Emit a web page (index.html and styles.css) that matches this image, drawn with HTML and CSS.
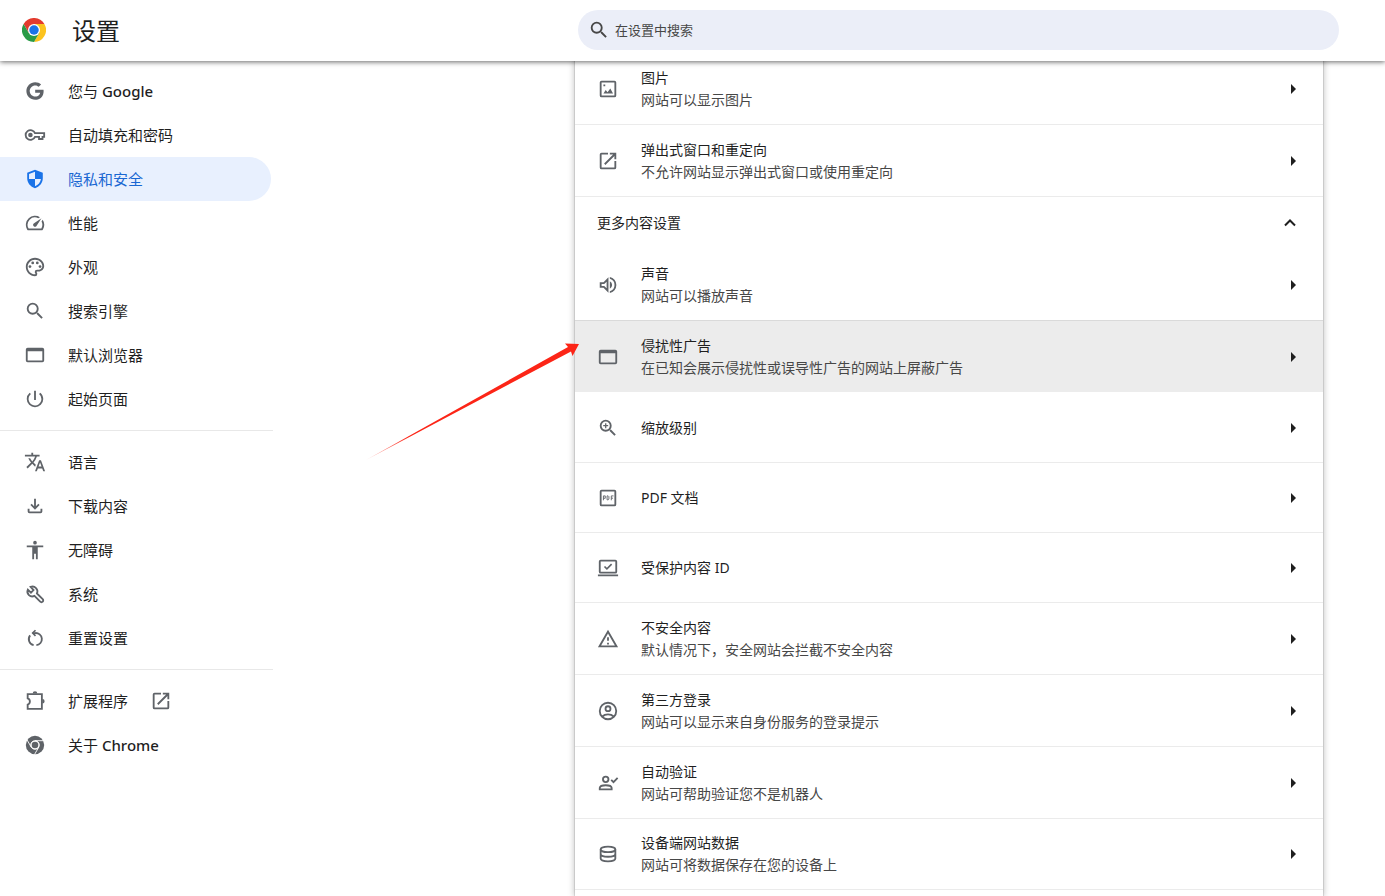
FILE: index.html
```html
<!DOCTYPE html>
<html lang="zh-CN">
<head>
<meta charset="utf-8">
<title>设置</title>
<link rel="stylesheet" href="styles.css">
</head>
<body>
<header class="toolbar">
  <svg class="logo" viewBox="0 0 48 48" aria-hidden="true">
    <circle cx="24" cy="24" r="24" fill="#fff"/>
    <path fill="#e33b2e" d="M24 12H44.8A24 24 0 0 0 3.2 12L13.6 30Z"/>
    <path fill="#fcc31e" d="M34.4 30 24 48A24 24 0 0 0 44.8 12H24Z"/>
    <path fill="#2a9a47" d="M13.6 30 3.2 12A24 24 0 0 0 24 48L34.4 30Z"/>
    <circle cx="24" cy="24" r="12" fill="#fff"/>
    <circle cx="24" cy="24" r="9.5" fill="#1a73e8"/>
  </svg>
  <h1 class="title">设置</h1>
  <label class="search">
    <svg class="search-icon" viewBox="0 0 24 24" aria-hidden="true"><path d="M15.5 14h-.79l-.28-.27A6.47 6.47 0 0 0 16 9.5 6.5 6.5 0 1 0 9.5 16c1.61 0 3.09-.59 4.23-1.57l.27.28v.79l5 4.99L20.49 19l-4.99-5zm-6 0C7.01 14 5 11.99 5 9.5S7.01 5 9.5 5 14 7.01 14 9.5 11.99 14 9.5 14z"/></svg>
    <input class="search-input" type="search" placeholder="在设置中搜索" aria-label="在设置中搜索">
  </label>
</header>

<div class="content">
  <nav class="menu">
    <a class="item" href="#"><svg class="icon" viewBox="-3 -3 30 30"><path d="M12.24 10.285V14.4h6.806c-.275 1.765-2.056 5.174-6.806 5.174-4.095 0-7.439-3.389-7.439-7.574s3.345-7.574 7.439-7.574c2.33 0 3.891.989 4.785 1.849l3.254-3.138C18.189 1.186 15.479 0 12.24 0c-6.635 0-12 5.365-12 12s5.365 12 12 12c6.926 0 11.52-4.869 11.52-11.726 0-.788-.085-1.39-.189-1.989H12.24z"/></svg><span class="label">您与 <span class="latin">Google</span></span></a>
    <a class="item" href="#"><svg class="icon" viewBox="0 0 24 24"><circle cx="7" cy="12" r="2.5"/><path class="line" d="M12 10H22V14H20.2V16.4H16.4V14H12A5.3 5.3 0 1 1 12 10Z"/></svg><span class="label">自动填充和密码</span></a>
    <a class="item selected" href="#" aria-current="page"><svg class="icon" viewBox="0 0 24 24"><path d="M12 2 3.500 5.200V11.300C3.500 16.200 7 20.700 12 22c5-1.300 8.500-5.800 8.500-10.700V5.200L12 2zm0 10h6.500c-.5 3.600-3 6.700-6.500 7.900V12H5.500V6.600L12 4.150V12z"/></svg><span class="label">隐私和安全</span></a>
    <a class="item" href="#"><svg class="icon" viewBox="0 0 24 24"><path d="m20.380 8.570-1.230 1.850a8 8 0 0 1-.22 7.580H5.070A8 8 0 0 1 15.580 6.850l1.850-1.230A10 10 0 0 0 3.350 19a2 2 0 0 0 1.720 1h13.850a2 2 0 0 0 1.740-1 10 10 0 0 0-.27-10.440zm-9.790 6.840a2 2 0 0 0 2.830 0l5.660-8.490-8.490 5.660a2 2 0 0 0 0 2.830z"/></svg><span class="label">性能</span></a>
    <a class="item" href="#"><svg class="icon" viewBox="0 0 24 24"><path d="M12 22C6.490 22 2 17.510 2 12S6.490 2 12 2s10 4.040 10 9c0 3.310-2.690 6-6 6h-1.770c-.28 0-.5.22-.5.5 0 .12.050.23.130.33.410.47.640 1.060.640 1.670A2.500 2.500 0 0 1 12 22zm0-18c-4.410 0-8 3.590-8 8s3.590 8 8 8c.28 0 .5-.22.5-.5a.54.54 0 0 0-.14-.35c-.41-.46-.63-1.050-.63-1.650a2.500 2.500 0 0 1 2.500-2.500H16c2.210 0 4-1.790 4-4 0-3.860-3.590-7-8-7z"/><circle cx="6.500" cy="11.500" r="1.500"/><circle cx="9.500" cy="7.500" r="1.500"/><circle cx="14.500" cy="7.500" r="1.500"/><circle cx="17.500" cy="11.500" r="1.500"/></svg><span class="label">外观</span></a>
    <a class="item" href="#"><svg class="icon" viewBox="0 0 24 24"><path d="M15.500 14h-.79l-.28-.27A6.470 6.470 0 0 0 16 9.500 6.500 6.500 0 1 0 9.500 16c1.610 0 3.090-.59 4.230-1.570l.27.28v.79l5 4.990L20.490 19l-4.990-5zm-6 0C7.010 14 5 11.990 5 9.500S7.010 5 9.500 5 14 7.010 14 9.500 11.990 14 9.500 14z"/></svg><span class="label">搜索引擎</span></a>
    <a class="item" href="#"><svg class="icon" viewBox="0 0 24 24"><path d="M20 4H4a2 2 0 0 0-2 2v12a2 2 0 0 0 2 2h16a2 2 0 0 0 2-2V6a2 2 0 0 0-2-2zm0 14H4V8h16z"/></svg><span class="label">默认浏览器</span></a>
    <a class="item" href="#"><svg class="icon" viewBox="0 0 24 24"><path d="M13 3h-2v10h2V3zm4.830 2.170-1.420 1.420A6.920 6.920 0 0 1 19 12a7 7 0 1 1-11.420-5.420L6.170 5.170A8.932 8.932 0 0 0 3 12a9 9 0 0 0 18 0c0-2.740-1.230-5.180-3.170-6.830z"/></svg><span class="label">起始页面</span></a>
    <hr class="separator">
    <a class="item" href="#"><svg class="icon" viewBox="0 0 24 24"><path d="m12.870 15.070-2.540-2.510.03-.03A17.520 17.520 0 0 0 14.070 6H17V4h-7V2H8v2H1v2h11.170C11.500 7.920 10.440 9.750 9 11.350 8.070 10.320 7.300 9.190 6.690 8h-2c.73 1.630 1.730 3.170 2.980 4.560l-5.090 5.020L4 19l5-5 3.110 3.110.76-2.040zM18.500 10h-2L12 22h2l1.120-3h4.750L21 22h2l-4.500-12zm-2.620 7 1.620-4.330L19.120 17h-3.240z"/></svg><span class="label">语言</span></a>
    <a class="item" href="#"><svg class="icon" viewBox="0 0 24 24"><path d="m12 16-5-5 1.400-1.450 2.600 2.600V4h2v8.150l2.600-2.600L17 11l-5 5zm-6 4a2 2 0 0 1-2-2v-3h2v3h12v-3h2v3a2 2 0 0 1-2 2H6z"/></svg><span class="label">下载内容</span></a>
    <a class="item" href="#"><svg class="icon" viewBox="0 0 24 24"><path d="M12 2a2 2 0 1 1 0 4 2 2 0 0 1 0-4zm9 7h-6v13h-2v-6h-2v6H9V9H3V7h18v2z"/></svg><span class="label">无障碍</span></a>
    <a class="item" href="#"><svg class="icon" viewBox="0 0 24 24"><path class="line" d="M4.200 7.200 7.600 10.500 10.400 7.700 7.200 4.300A5.300 5.300 0 0 1 14.100 11.400L20.400 17.700A1.900 1.900 0 0 1 17.700 20.400L11.400 14.100A5.300 5.300 0 0 1 4.200 7.200Z"/></svg><span class="label">系统</span></a>
    <a class="item" href="#"><svg class="icon" viewBox="0 0 24 24"><path class="line" d="M13.500 19.800A6.600 6.600 0 0 0 12.200 6.600H9.500M10.500 19.800A6.600 6.600 0 0 1 6.700 9.200"/><path d="m11.900 2.900 1.300 1.300-2.400 2.400 2.400 2.400-1.300 1.300-3.700-3.700z"/></svg><span class="label">重置设置</span></a>
    <hr class="separator">
    <a class="item" href="#"><svg class="icon" viewBox="0 0 24 24"><path class="line" d="M4 4.500H19.500V20.500H4V16A3.600 3.600 0 0 0 4 9.200Z"/><path d="M9.500 3.800a2.500 2.500 0 0 1 5 0zM20 9.800a2.500 2.500 0 0 1 0 5z"/></svg><span class="label">扩展程序</span><svg class="icon external" viewBox="0 0 24 24"><path d="M19 19H5V5h7V3H5a2 2 0 0 0-2 2v14a2 2 0 0 0 2 2h14a2 2 0 0 0 2-2v-7h-2v7zM14 3v2h3.590l-9.830 9.830 1.410 1.410L19 6.410V10h2V3h-7z"/></svg></a>
    <a class="item" href="#"><svg class="icon" viewBox="0 0 24 24"><circle cx="12" cy="12" r="10"/><circle class="cut" cx="12" cy="12" r="4.700"/><path class="cut" d="M12 7.300H21.500M7.900 14.400 3.200 6.200M16.100 14.400 11.400 22.500"/><circle cx="12" cy="12" r="3.600"/></svg><span class="label">关于 <span class="latin">Chrome</span></span></a>
  </nav>

  <main class="main">
    <section class="panel">
      <button class="row" type="button"><svg class="icon" viewBox="0 0 24 24"><path d="M19 5v14H5V5h14m0-2H5a2 2 0 0 0-2 2v14a2 2 0 0 0 2 2h14a2 2 0 0 0 2-2V5a2 2 0 0 0-2-2zM7 17l2.500-4 2 2.500 3-4L17.500 17zM7 7h2v2H7z"/></svg><span class="text"><span class="name">图片</span><span class="note">网站可以显示图片</span></span><svg class="arrow" viewBox="0 0 22 22"><path d="M9 6 14 11 9 16z"/></svg></button>
      <button class="row" type="button"><svg class="icon" viewBox="0 0 24 24"><path d="M19 19H5V5h7V3H5a2 2 0 0 0-2 2v14a2 2 0 0 0 2 2h14a2 2 0 0 0 2-2v-7h-2v7zM14 3v2h3.590l-9.830 9.830 1.410 1.410L19 6.410V10h2V3h-7z"/></svg><span class="text"><span class="name">弹出式窗口和重定向</span><span class="note">不允许网站显示弹出式窗口或使用重定向</span></span><svg class="arrow" viewBox="0 0 22 22"><path d="M9 6 14 11 9 16z"/></svg></button>
      <button class="row group" type="button" aria-expanded="true"><span class="text">更多内容设置</span><svg class="arrow" viewBox="0 0 22 22"><path class="chevron" d="M3 13.500 8 8.500 13 13.500"/></svg></button>
      <button class="row first" type="button"><svg class="icon" viewBox="0 0 24 24"><path class="line" d="M4 10H7.500L11.500 6V18L7.500 14H4Z"/><path d="M14 3.200v2.060a7 7 0 0 1 0 13.480v2.060a9 9 0 0 0 0-17.600zM14 7.970v8.050a4.500 4.500 0 0 0 0-8.050z"/></svg><span class="text"><span class="name">声音</span><span class="note">网站可以播放声音</span></span><svg class="arrow" viewBox="0 0 22 22"><path d="M9 6 14 11 9 16z"/></svg></button>
      <button class="row active" type="button"><svg class="icon" viewBox="0 0 24 24"><path d="M20 4H4a2 2 0 0 0-2 2v12a2 2 0 0 0 2 2h16a2 2 0 0 0 2-2V6a2 2 0 0 0-2-2zm0 14H4V8h16z"/></svg><span class="text"><span class="name">侵扰性广告</span><span class="note">在已知会展示侵扰性或误导性广告的网站上屏蔽广告</span></span><svg class="arrow" viewBox="0 0 22 22"><path d="M9 6 14 11 9 16z"/></svg></button>
      <button class="row single" type="button"><svg class="icon" viewBox="0 0 24 24"><path d="M15.500 14h-.79l-.28-.27A6.470 6.470 0 0 0 16 9.500 6.500 6.500 0 1 0 9.500 16c1.610 0 3.090-.59 4.230-1.570l.27.28v.79l5 4.990L20.490 19l-4.990-5zm-6 0C7.010 14 5 11.990 5 9.500S7.010 5 9.500 5 14 7.010 14 9.500 11.990 14 9.500 14zM8.800 6.800h1.400v2h2v1.400h-2v2H8.800v-2h-2V8.800h2z"/></svg><span class="text">缩放级别</span><svg class="arrow" viewBox="0 0 22 22"><path d="M9 6 14 11 9 16z"/></svg></button>
      <button class="row single" type="button"><svg class="icon" viewBox="0 0 24 24"><path d="M19 5v14H5V5h14m0-2H5a2 2 0 0 0-2 2v14a2 2 0 0 0 2 2h14a2 2 0 0 0 2-2V5a2 2 0 0 0-2-2z"/><path class="thin" d="M7 14.500V9.700H9V12.300H7M11 9.700V14H12.200L13 13.200V10.500L12.200 9.700ZM15.600 14.500V9.700H18M15.600 12.200H17.500"/></svg><span class="text">PDF 文档</span><svg class="arrow" viewBox="0 0 22 22"><path d="M9 6 14 11 9 16z"/></svg></button>
      <button class="row single" type="button"><svg class="icon" viewBox="0 0 24 24"><path d="M20 18a2 2 0 0 0 2-2V5a2 2 0 0 0-2-2H4a2 2 0 0 0-2 2v11a2 2 0 0 0 2 2zM4 5h16v11H4zM1 19h22v2H1zM10.800 14.300l-3.300-3.300 1.300-1.300 2 2 4.500-4.500 1.300 1.300z"/></svg><span class="text">受保护内容 ID</span><svg class="arrow" viewBox="0 0 22 22"><path d="M9 6 14 11 9 16z"/></svg></button>
      <button class="row" type="button"><svg class="icon" viewBox="0 0 24 24"><path d="M12 5.990 19.530 19H4.470L12 5.990M12 2 1 21h22L12 2zm1 14h-2v2h2v-2zm0-6h-2v4h2v-4z"/></svg><span class="text"><span class="name">不安全内容</span><span class="note">默认情况下，安全网站会拦截不安全内容</span></span><svg class="arrow" viewBox="0 0 22 22"><path d="M9 6 14 11 9 16z"/></svg></button>
      <button class="row" type="button"><svg class="icon" viewBox="0 0 24 24"><circle class="line" cx="12" cy="12" r="9"/><circle class="line" cx="12" cy="9.500" r="2.700"/><path class="line" d="M5.800 18C9 14.800 15 14.800 18.200 18"/></svg><span class="text"><span class="name">第三方登录</span><span class="note">网站可以显示来自身份服务的登录提示</span></span><svg class="arrow" viewBox="0 0 22 22"><path d="M9 6 14 11 9 16z"/></svg></button>
      <button class="row" type="button"><svg class="icon" viewBox="0 0 24 24"><circle class="line" cx="9.500" cy="8" r="3"/><path class="line" d="M3 19V17.300C3.500 13.500 15.500 13.500 16 17.300V19ZM15.500 8.500 18 11 22.500 6.500"/></svg><span class="text"><span class="name">自动验证</span><span class="note">网站可帮助验证您不是机器人</span></span><svg class="arrow" viewBox="0 0 22 22"><path d="M9 6 14 11 9 16z"/></svg></button>
      <button class="row last" type="button"><svg class="icon" viewBox="0 0 24 24"><ellipse class="line" cx="12" cy="7" rx="8" ry="3"/><path class="line" d="M4 7V17C4 21 20 21 20 17V7M4 12C4 16 20 16 20 12"/></svg><span class="text"><span class="name">设备端网站数据</span><span class="note">网站可将数据保存在您的设备上</span></span><svg class="arrow" viewBox="0 0 22 22"><path d="M9 6 14 11 9 16z"/></svg></button>
      <svg class="pointer" viewBox="0 0 214 118" aria-hidden="true">
        <defs><linearGradient id="fade"><stop offset="0" stop-color="#fc2517" stop-opacity=".3"/><stop offset=".2" stop-color="#fc2517"/></linearGradient></defs>
        <path fill="url(#fade)" d="M0 117 202 4 199 0.500 213 1 206.500 13 205 8.500Z"/>
      </svg>
    </section>
  </main>
</div>
</body>
</html>
```
FILE: styles.css
```css
* {
  box-sizing: border-box;
}

body {
  margin: 0;
  height: 100vh;
  display: flex;
  flex-direction: column;
  overflow: hidden;
  background: #fff;
  color: #1f1f1f;
  font-family: "Noto Sans", "Noto Sans CJK SC", sans-serif;
}

.toolbar {
  position: relative;
  z-index: 2;
  display: flex;
  align-items: center;
  flex: none;
  padding: 10px 46px 11px 22px;
  background: #fff;
  box-shadow: 0 1px 5px rgba(0, 0, 0, 0.6);
}

.logo {
  width: 24px;
  height: 24px;
  flex: none;
}

.title {
  margin: 2px 26px 0;
  font-size: 24px;
  line-height: 32px;
  font-weight: 400;
  white-space: nowrap;
}

.search {
  display: flex;
  align-items: center;
  gap: 5px;
  width: 100%;
  max-width: 761px;
  height: 40px;
  margin-left: auto;
  padding: 0 22px 0 10px;
  border-radius: 20px;
  background: #ebeef8;
}

.search-icon {
  width: 22px;
  height: 22px;
  flex: none;
  fill: #474747;
}

.search-input {
  flex: 1;
  min-width: 0;
  padding: 0;
  border: 0;
  outline: 0;
  background: none;
  color: #474747;
  font: inherit;
  font-size: 13px;
}

.search-input::placeholder {
  color: #474747;
}

.content {
  display: flex;
  flex: 1;
  min-height: 0;
}

.menu {
  width: 273px;
  flex: none;
  padding-top: 8px;
}

.item {
  display: flex;
  align-items: center;
  gap: 22px;
  height: 44px;
  margin-right: 2px;
  padding-left: 24px;
  border-radius: 0 22px 22px 0;
  color: #1f1f1f;
  font-size: 15px;
  line-height: 22px;
  text-decoration: none;
}

.latin {
  font-weight: 500;
}

.selected {
  background: #e8f0fe;
  color: #1967d2;
}

.separator {
  height: 1px;
  margin: 9px 0;
  border: 0;
  background: #e8e8e8;
}

.icon {
  width: 22px;
  height: 22px;
  flex: none;
  fill: #5f6368;
}

.selected .icon {
  fill: #1a73e8;
}

.icon .line,
.icon .thin {
  fill: none;
  stroke: #5f6368;
  stroke-width: 2;
}

.icon .thin {
  stroke-width: 1;
}

.icon .cut {
  fill: #fff;
  stroke: #fff;
  stroke-width: 1;
}

.main {
  display: flex;
  flex: 1;
  justify-content: flex-end;
  min-width: 0;
  padding-right: 62px;
}

.panel {
  position: relative;
  width: 100%;
  max-width: 748px;
  margin-top: -8px;
  background: #fff;
  box-shadow: 0 0 1px rgba(0, 0, 0, 0.5), 0 1px 7px rgba(0, 0, 0, 0.3);
}

.row {
  display: flex;
  align-items: center;
  gap: 22px;
  width: 100%;
  min-height: 72px;
  padding: 0 19px 0 22px;
  border: 0;
  border-top: 1px solid #ebebeb;
  background: none;
  color: #1f1f1f;
  font: inherit;
  font-size: 14px;
  line-height: 22px;
  text-align: left;
}

.row:first-child,
.first {
  min-height: 71px;
  border-top: 0;
}

.single {
  min-height: 70px;
}

.group {
  min-height: 53px;
}

.active {
  border-top-color: #dadada;
  background: #ececec;
}

.active + .row {
  border-top-color: transparent;
}

.last {
  border-bottom: 1px solid #ebebeb;
}

.text {
  display: flex;
  flex: 1;
  flex-direction: column;
}

.note {
  color: #474747;
}

.arrow {
  width: 22px;
  height: 22px;
  flex: none;
  fill: #1f1f1f;
}

.chevron {
  fill: none;
  stroke: #1f1f1f;
  stroke-width: 2;
}

/* Pointer laid over the page, ending at the highlighted row */
.pointer {
  position: absolute;
  top: 290px;
  left: -209px;
  width: 214px;
  height: 118px;
}
```
